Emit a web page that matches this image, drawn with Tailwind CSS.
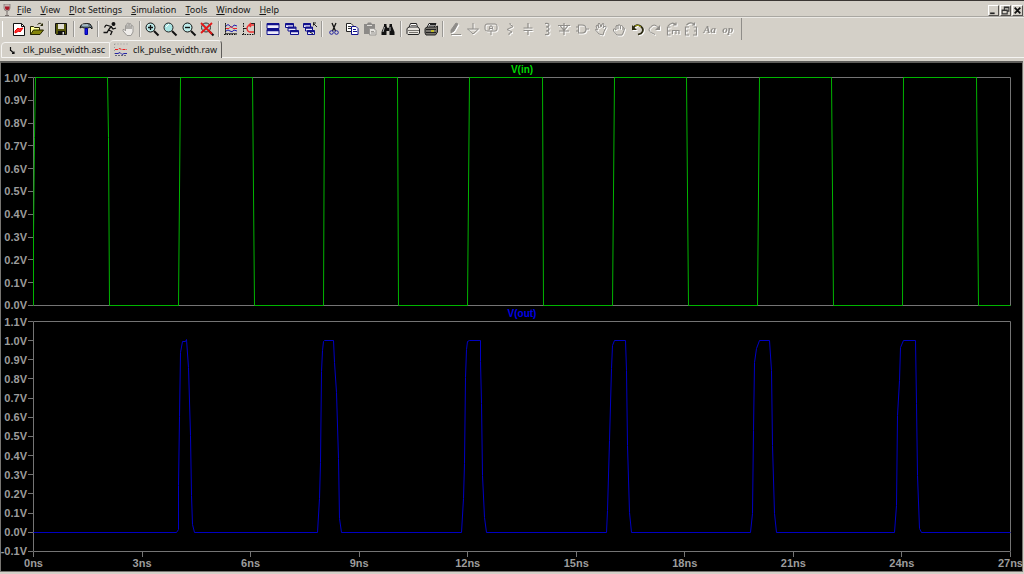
<!DOCTYPE html>
<html lang="en">
<head>
  <meta charset="UTF-8" />
  <title>clk_pulse_width.raw</title>
  <script src="https://cdn.jsdelivr.net/npm/@tailwindcss/browser@4"></script>
</head>
<body class="flex h-screen flex-col overflow-hidden border-t border-[#3a3634] bg-[#d4d0c8] font-['Noto_Sans','Open_Sans',sans-serif] text-[9px] leading-[12px] text-[#151515]">

  <!-- menu bar -->
  <header class="flex h-4 shrink-0 items-center border-b border-[#a9a7a2] pt-[3px]">
    <svg class="mx-px h-3 w-3 shrink-0" viewBox="0 0 12 12" fill="none">
      <path d="M3 0h6v4q0 3-3 3T3 4z" fill="#c9b5b2" stroke="#77706d" stroke-width=".7"/>
      <path d="M4 2.500h4.500v2Q8 6 6 6T4 4z" fill="#a81625"/>
      <path d="M6 7v4M4 11.500h4" stroke="#776f6c"/>
    </svg>
    <nav class="flex gap-[9px] pl-[3px]">
      <a href="#"><u>F</u>ile</a>
      <a href="#"><u>V</u>iew</a>
      <a href="#"><u>P</u>lot Settings</a>
      <a href="#"><u>S</u>imulation</a>
      <a href="#"><u>T</u>ools</a>
      <a href="#"><u>W</u>indow</a>
      <a href="#"><u>H</u>elp</a>
    </nav>
    <div class="ml-auto flex gap-px pr-px [&_button]:h-[11px] [&_button]:w-[11px] [&_button]:border [&_button]:border-t-white [&_button]:border-l-white [&_button]:border-r-[#55524f] [&_button]:border-b-[#55524f]">
      <button aria-label="Minimize"><svg viewBox="0 0 8 8"><path d="M1 6.500h4" stroke="#222" stroke-width="1.500"/></svg></button>
      <button aria-label="Restore"><svg viewBox="0 0 8 8" fill="none" stroke="#333"><path d="M3 3V1h4v3.500H5.500M3 1.500h4M1 3.500h4.500v3.500H1zM1 4h4"/></svg></button>
      <button aria-label="Close"><svg viewBox="0 0 8 8"><path d="M1.500 1.500l5 5M6.500 1.500l-5 5" stroke="#111" stroke-width="1.600"/></svg></button>
    </div>
  </header>

  <!-- toolbar -->
  <div class="flex h-[23px] shrink-0 border-t border-[#eceae6]">
    <div class="ml-[2px] w-px self-center h-4 bg-white"></div>
    <div class="ml-[7px] flex w-[727px] shrink-0 items-center [&_button]:flex [&_button]:flex-1 [&_button]:justify-center [&_svg]:size-4 [&_svg]:shrink-0 [&_svg]:fill-none [&_i]:mx-[2px] [&_i]:h-4 [&_i]:w-[2px] [&_i]:border-l [&_i]:border-[#9a9894] [&_i]:bg-[#f1efec]">
      <button aria-label="New schematic"><svg viewBox="0 0 16 16" stroke="#111"><path d="M2.500 2.500h8l3 3v9h-11z" fill="#fff"/><path d="M10.500 2.500v3h3"/><path d="M4 10l3-3 1 1 4-1-3 4-1-1-4 2z" fill="#f33" stroke="#e00"/></svg></button>
      <button aria-label="Open"><svg viewBox="0 0 16 16" stroke="#222200"><path d="M1.500 13.500v-8h3l1 1h5v3" fill="#ffff9a"/><path d="M1.500 13.500l3-4.500h10l-3.500 4.500z" fill="#85850b"/><path d="M8.500 3.500q3-3 5 1M11.500 4.500h2v-2"/></svg></button>
      <i></i>
      <button aria-label="Save"><svg viewBox="0 0 16 16"><path d="M2.500 2.500h11v11h-10l-1-1z" fill="#55550a" stroke="#111"/><path d="M5 3h6v5H5z" fill="#e0ddd2"/><path d="M5 10h7v4H5z" fill="#111"/><path d="M9.500 11h1.500v2.500H9.500z" fill="#ddd"/></svg></button>
      <i></i>
      <button aria-label="Control panel"><svg viewBox="0 0 16 16"><path d="M2 7q0-3 3-4 4-1 7 0l2 3v2l-2-2-2 1H6L4 6z" fill="#6f8794" stroke="#111"/><path d="M4 4h6" stroke="#d7e7ec"/><path d="M7 7.500h2.500v6h-2.500z" fill="#1616e8" stroke="#0000a0"/></svg></button>
      <i></i>
      <button aria-label="Run"><svg viewBox="0 0 16 16" stroke="#111" stroke-width="1.300"><circle cx="11.500" cy="3" r="1.300" fill="#111"/><path d="M4 4l5 1.500L6.500 9l3.500 1.500L8.500 14M9 5.500l2 2.500 3-1M6.500 9L5 11.500H1.500M4 4L2.500 6.500"/></svg></button>
      <button aria-label="Halt" disabled><svg viewBox="0 0 16 16" stroke="#9c9a96"><path d="M5.500 10V4.500q1-1 1.500 0V8 2.500q1-1 2 0V8 3q1-1 2 0v5-3q1-1 2 0v6l-2 3.500H7L3 10V8.500q1-1 2.500 1.500z" fill="#eeece9"/></svg></button>
      <i></i>
      <button aria-label="Zoom in"><svg viewBox="0 0 16 16"><circle cx="6.500" cy="6.500" r="4.500" fill="#bdebea" stroke="#111"/><path d="M10 10l4.500 4.500" stroke="#111" stroke-width="2"/><path d="M4 6.500h5M6.500 4v5" stroke="#111" stroke-width="1.300"/></svg></button>
      <button aria-label="Pan"><svg viewBox="0 0 16 16"><circle cx="6.500" cy="6.500" r="4.500" fill="#a9e4e2" stroke="#222"/><path d="M4 6l3-3" stroke="#fff"/><path d="M10 10l4.500 4.500" stroke="#111" stroke-width="2"/></svg></button>
      <button aria-label="Zoom out"><svg viewBox="0 0 16 16"><circle cx="6.500" cy="6.500" r="4.500" fill="#bdebea" stroke="#111"/><path d="M10 10l4.500 4.500" stroke="#111" stroke-width="2"/><path d="M4 6.500h5" stroke="#111" stroke-width="1.400"/></svg></button>
      <button aria-label="Zoom to fit"><svg viewBox="0 0 16 16"><circle cx="7" cy="6.500" r="4.500" fill="#a6cfce" stroke="#333"/><path d="M10 10l4.500 4.500" stroke="#111" stroke-width="2"/><path d="M2 2l11 11M13 2L2 12" stroke="#e31818" stroke-width="1.800"/></svg></button>
      <i></i>
      <button aria-label="Autorange"><svg viewBox="0 0 16 16"><path d="M2.500 2v12M1 13.500h13" stroke="#111" stroke-dasharray="1.500 1"/><path d="M2 12.500h12M2.500 2v11" stroke="#222" stroke-width=".7"/><path d="M3 5q2-3 4 0t4-1l3 1" stroke="#2222b0"/><path d="M3 7.500h3l2-2 2 2h4" stroke="#ee2424"/><path d="M3 10q2-2 4 0t4-1l3 1" stroke="#2222b0"/></svg></button>
      <button aria-label="Plot limits"><svg viewBox="0 0 16 16"><path d="M2.500 2v12M1 13.500h13" stroke="#111" stroke-dasharray="1.500 1"/><path d="M13.500 2v11M9 2.500h4M3 7.500h3" stroke="#222"/><path d="M13 4H8.500Q6 5 6 7.500T8.500 11H13M10 2l-2 2 2 2" stroke="#ee3030" stroke-width="1.300"/></svg></button>
      <i></i>
      <button aria-label="Tile windows"><svg viewBox="0 0 16 16" stroke="#10108c"><path d="M2 2.500h12v5H2zM2 8.500h12v5H2z" fill="#eceafa"/><path d="M2 3.500h12M2 9.500h12" stroke-width="1.600"/></svg></button>
      <button aria-label="Cascade windows"><svg viewBox="0 0 16 16" stroke="#10108c"><path d="M1.500 2.500h8v4h-8zM4 6h8v4H4zM6.500 9.500h8v4h-8z" fill="#eceafa"/><path d="M1 3.500h9M4 7h8M6 10.500h9" stroke-width="1.600"/></svg></button>
      <button aria-label="Close all windows"><svg viewBox="0 0 16 16" stroke="#10108c"><path d="M1.500 2.500h7v4h-7zM3.500 6h7v4h-7zM5.500 9.500h7v4h-7z" fill="#eceafa"/><path d="M1 3.500h8M3 7h8M5 10.500h8" stroke-width="1.600"/><path d="M11 2h3M11.500 1.500v3M11 2l4 4M8 11l3 2" stroke="#222"/></svg></button>
      <i></i>
      <button aria-label="Cut"><svg viewBox="0 0 16 16"><path d="M6 2l3.500 8M10 2L6.500 10" stroke="#111" stroke-width="1.300"/><circle cx="5.500" cy="11.500" r="1.800" stroke="#2020a0"/><circle cx="10.500" cy="11.500" r="1.800" stroke="#2020a0"/></svg></button>
      <button aria-label="Copy"><svg viewBox="0 0 16 16"><path d="M2.500 2.500H7l2 2v6H2.500z" fill="#fff" stroke="#222"/><path d="M4 5.500h3M4 7.500h3" stroke="#333"/><path d="M7.500 5.500H12l2 2v6H7.500z" fill="#fff" stroke="#10108c"/><path d="M9 8.500h3M9 10.500h4" stroke="#10108c"/></svg></button>
      <button aria-label="Paste" disabled><svg viewBox="0 0 16 16"><path d="M2 3h3l1-1.500h3L10 3h3v10H2z" fill="#8c8a87"/><path d="M5 4.500h5" stroke="#e0deda"/><path d="M7.500 7.500H12l2 2v4.500H7.500z" fill="#e6e4e0" stroke="#999793"/><path d="M9 10.500h3M9 12h4" stroke="#999793"/></svg></button>
      <button aria-label="Find"><svg viewBox="0 0 16 16"><path d="M4 3h2.500v2L7.500 7h1L9.500 5V3H12v2l2.500 6v3H9.500v-4h-3v4H1.500v-3L4 5z" fill="#111"/><path d="M4.500 6L3 11M10 6v4" stroke="#bbb"/></svg></button>
      <i></i>
      <button aria-label="Print setup"><svg viewBox="0 0 16 16" stroke="#222"><path d="M4 6.500l1.500-4h6l1 4" fill="#fff"/><path d="M2 7.500l2-1.500h9l1.500 2v4l-1 1.500H3l-1-1z" fill="#e8e5df"/><path d="M6 4.500h5M3 9.500h11M4 11.500h9" stroke="#77746f"/></svg></button>
      <button aria-label="Print"><svg viewBox="0 0 16 16" stroke="#222"><path d="M4 6.500l2-4h7l-2 4" fill="#fff"/><path d="M2 7.500l2-1.500h9l1.500-1v6l-2 3H3l-1-2z" fill="#77746e"/><path d="M7 3.500h5M6 5h5M3 8.500h10M3 11.500h10"/><path d="M8 10h3" stroke="#d8d410" stroke-width="1.500"/></svg></button>
      <i></i>
      <!-- schematic tools, greyed out while a waveform has the focus -->
      <span class="contents text-[#8f8d89] [&_svg]:stroke-current [&_svg]:drop-shadow-[1px_1px_0_white]">
        <button aria-label="Wire" disabled><svg viewBox="0 0 16 16"><path d="M9 2L4 9v3l3-2 4-7z" fill="#8d8b88"/><path d="M4 13.500h10"/></svg></button>
        <button aria-label="Ground" disabled><svg viewBox="0 0 16 16"><path d="M8 2v6M2.500 8h11L8 13z"/></svg></button>
        <button aria-label="Net label" disabled><svg viewBox="0 0 16 16"><path d="M4 3h8q2 0 2 2v3q0 2-2 2H4q-2 0-2-2V5q0-2 2-2zM8 10v4M6 9l1-4h2l1 4M6.500 7.500h3"/></svg></button>
        <button aria-label="Resistor" disabled><svg viewBox="0 0 16 16"><path d="M8 2v1.500l3 2-6 3 5 2.500-3 1.500V14"/></svg></button>
        <button aria-label="Capacitor" disabled><svg viewBox="0 0 16 16"><path d="M8 2v5M3.500 7h9M3.500 9.500h9M8 9.500V14" stroke-width="1.200"/></svg></button>
        <button aria-label="Inductor" disabled><svg viewBox="0 0 16 16"><path d="M7 2.500q4-.5 4 1.500T8 6q3 0 3 2t-3 2q3 0 3 2t-4 1.500" stroke-width="1.200"/></svg></button>
        <button aria-label="Diode" disabled><svg viewBox="0 0 16 16"><path d="M8 2v12M2 4.500h12M4 4.500l4 5 4-5M3 10h10" stroke-width="1.200"/></svg></button>
        <button aria-label="Component" disabled><svg viewBox="0 0 16 16"><path d="M4.500 4H8q4 0 4 4t-4 4H4.500zM2 6h2.500M2 10h2.500M12 8h3" stroke-width="1.200"/></svg></button>
        <button aria-label="Move" disabled><svg viewBox="0 0 16 16"><path d="M6 13L2.500 9q0-2 2 0L3 5q1-1.500 2 0l1 2-1-4q1-1.500 2 0l1 3 1-3q1-1 2 0l-1 4 2-2q1.500 0 1 1.500l-2 4L10 14z"/></svg></button>
        <button aria-label="Drag" disabled><svg viewBox="0 0 16 16"><path d="M6 14l-3.500-4V8q1-1 2.500 1V5q1-1.500 2 0 0-2 2-1l.5 1q1-1 2 0l.5 1.500q1.500 0 1.500 1.500L12 12l-1 2zM7 5v3M9.500 5v3M12 6.500V9"/></svg></button>
        <button aria-label="Undo"><svg class="text-[#2c2a12]" viewBox="0 0 16 16"><path d="M4 7q4-5 8-1.500t0 7l-3 1" stroke-width="1.800"/><path d="M6 5q3-2 6 1" stroke="#a6a414"/><path d="M3 4v5h5z" fill="currentColor" stroke="none"/></svg></button>
        <button aria-label="Redo" disabled><svg viewBox="0 0 16 16"><path d="M11.500 7Q8 2 4 5.500t0 6l4 2"/><path d="M13 4v5H8z" fill="currentColor" stroke="none"/></svg></button>
        <button aria-label="Rotate" disabled><svg viewBox="0 0 16 16"><path d="M3 5q4-5 8-1M11 1.500V4H8M5.500 6H2.500v8h3M2.500 10h3M7.500 13V9.500H14V13M11 9.500V13" stroke-width="1.200"/></svg></button>
        <button aria-label="Mirror" disabled><svg viewBox="0 0 16 16"><path d="M3.500 4q4-4 8-.5M11.500 1.500V4H9M6 6H2.500v8H6M2.500 10H5M10.500 6H13.500v8h-3.500M13.500 10H11" stroke-width="1.200"/></svg></button>
        <button aria-label="Text" disabled class="font-['Liberation_Serif',serif] text-[11px] font-bold italic drop-shadow-[1px_1px_0_white]">Aa</button>
        <button aria-label="SPICE directive" disabled class="font-['Liberation_Serif',serif] text-[11px] font-bold italic drop-shadow-[1px_1px_0_white]">op</button>
      </span>
    </div>
    <div class="ml-1 w-px bg-[#8f8d89]"></div>
  </div>

  <!-- document tabs -->
  <div class="flex h-[18px] shrink-0 items-end">
    <a href="#" class="ml-px flex h-4 w-[109px] items-center rounded-tl border border-[#f5f4f2] pl-[6px]">
      <svg class="mr-[3px] size-3" viewBox="0 0 12 12"><path d="M2.500 3v4M3 6.500l3 3M6 7.500v2H4" fill="none" stroke="#111" stroke-width="1.200"/></svg>clk_pulse_width.asc
    </a>
    <a href="#" class="flex h-[18px] w-[112px] items-center rounded-t border-t border-r border-t-[#f5f4f2] border-r-[#5f5d5a] pl-[4px]">
      <svg class="mr-[5px] h-[14px] w-[14px]" viewBox="0 0 14 14" fill="none"><path d="M.5 1h13M.5 1v12" stroke="#999" stroke-dasharray="1 2"/><path d="M1 6.500h3l1-1 3 1h5" stroke="#e22" stroke-dasharray="3 1"/><path d="M1 10.500h3l2-1 2 2 2-1h3" stroke="#2424a8"/><path d="M1 12.500h12" stroke="#667" stroke-dasharray="2 1"/></svg>clk_pulse_width.raw
    </a>
    <span class="h-px flex-1 bg-[#f5f4f2]"></span>
  </div>

  <!-- waveform window -->
  <main class="mt-[3px] mb-[2px] mr-px flex min-h-0 flex-1 flex-col border border-t-2 border-[#777571] border-t-[#5e5d5a] bg-black pr-[11px] font-['Liberation_Sans',Arial,sans-serif] text-[11px] font-bold text-[#9c9c9c]">
    <h2 class="h-[14px] shrink-0 pl-8 text-center text-[10px] leading-[14px] text-[#00d800]">V(in)</h2>
    <section class="flex min-h-0 flex-[229_1_0]">
      <ul id="inAxis" class="flex w-8 shrink-0 flex-col justify-between"></ul>
      <svg class="min-w-0 flex-1 overflow-visible" viewBox="0 0 978 229" preserveAspectRatio="none" fill="none">
        <g transform="translate(.5 .5)">
          <path d="M0 0H977V228H0z" stroke="#747474"/>
          <path d="M0 228V158L1 60L2 0H74L75 60L76 228H145L147 0H219L221 228H290L291 0H364L365 228H434L436 0H509L510 228H579L581 0H653L655 228H724L726 0H798L800 228H869L870 0H943L945 228H977" stroke="#00b400" stroke-linejoin="bevel"/>
        </g>
      </svg>
    </section>
    <h2 class="h-[15px] shrink-0 pl-8 text-center text-[10px] leading-[15px] text-[#0000e8]">V(out)</h2>
    <section class="flex min-h-0 flex-[231_1_0]">
      <ul id="outAxis" class="flex w-8 shrink-0 flex-col justify-between"></ul>
      <svg class="min-w-0 flex-1 overflow-visible" viewBox="0 0 978 231" preserveAspectRatio="none" fill="none">
        <g transform="translate(.5 .5)">
          <path d="M0 0H977V230H0z" stroke="#747474"/>
          <path d="M0 211H143L145 208V164L146 95L147 31L149 20H152L153 18L155 46L157 114L158 174L159 203L161 211
                   H284L286 177L287 141L288 50L289 29L290 20L291 19H300L301 41L303 71L305 137L306 197L308 211
                   H428L430 177L431 142L432 56L433 28L434 20L436 19H447V40L448 82L449 154L451 196L453 211
                   H573L574 189L576 119L578 47L579 24L581 19H592L593 49L594 124L596 191L598 211
                   H717L719 192L720 109L721 41L723 27L726 19H736L738 49L739 124L741 192L743 211
                   H861L863 184L864 94L866 59L867 26L870 19H882L883 82L884 154L886 207L888 211H977" stroke="#0000c4" stroke-linejoin="bevel"/>
        </g>
      </svg>
    </section>
    <ul id="timeAxis" class="ml-8 flex h-[19px] shrink-0 justify-between"></ul>
  </main>

  <script>
    // voltage labels, top to bottom, each with a tick touching the frame
    function voltAxis(id, top, bottom) {
      let html = '';
      for (let v = top; v >= bottom; v--) {
        html += '<li class="flex h-px items-center justify-end whitespace-nowrap">' + (v / 10).toFixed(1) + 'V<span class="ml-px h-px w-[5px] shrink-0 bg-[#747474]"></span></li>';
      }
      document.getElementById(id).innerHTML = html;
    }
    voltAxis('inAxis', 10, 0);
    voltAxis('outAxis', 11, -1);

    let times = '';
    for (let t = 0; t <= 27; t += 3) {
      times += '<li class="flex w-px flex-col items-center whitespace-nowrap leading-[12px]"><span class="h-[5px] w-px shrink-0 bg-[#747474]"></span>' + t + 'ns</li>';
    }
    document.getElementById('timeAxis').innerHTML = times;
  </script>
</body>
</html>
